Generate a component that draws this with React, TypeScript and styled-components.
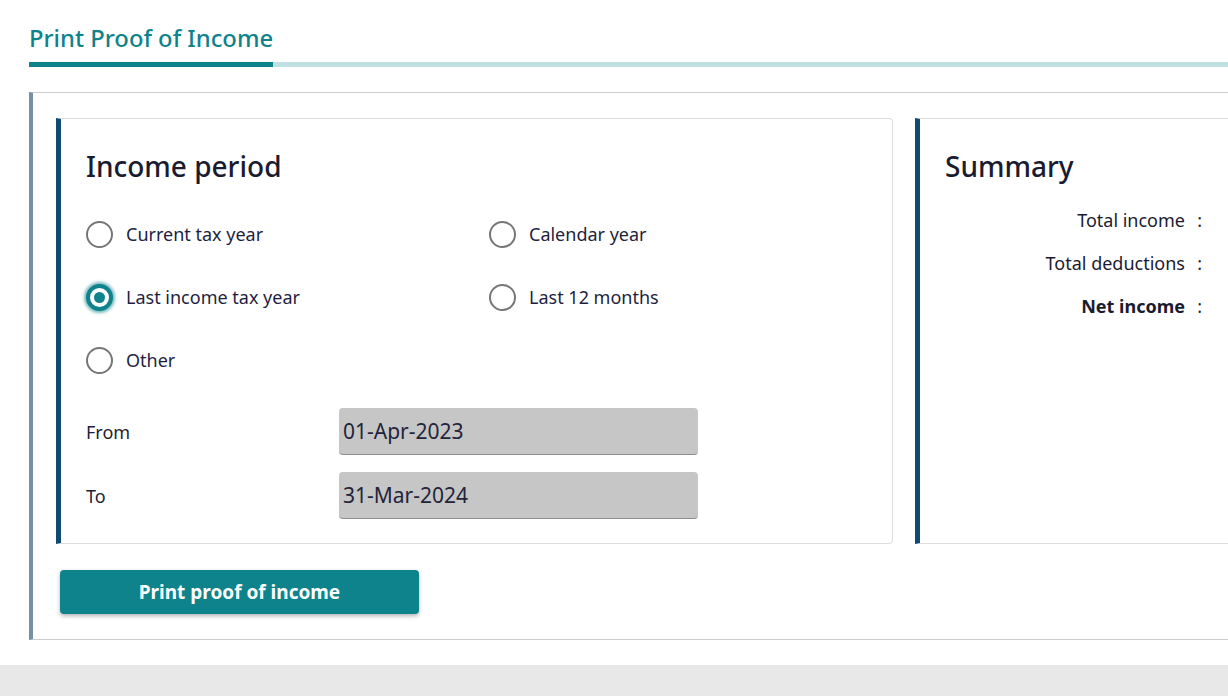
import React, { useState } from 'react'
import styled, { createGlobalStyle } from 'styled-components'

const GlobalStyle = createGlobalStyle`
  html, body {
    margin: 0;
    padding: 0;
    background: #e8e8e8;
    font-family: "Noto Sans", "Open Sans", sans-serif;
    color: #1e1f36;
  }
`

const Page = styled.div`
  background: #fff;
  padding: 0 0 25px 29px;
  overflow: hidden;
`

const TitleBar = styled.div`
  padding-top: 20px;
  display: flex;
  flex-direction: column;
`

const Title = styled.h1`
  margin: 0;
  font-size: 23.8px;
  font-weight: 500;
  line-height: 36px;
  color: #0e838c;
`

const Rule = styled.div`
  display: flex;
  height: 5px;
  margin-top: 6px;
  background: #bfe0e3;
`

const RuleActive = styled.div`
  width: 244px;
  background: #0e838c;
`

const Panel = styled.section`
  margin-top: 25px;
  border-top: 1px solid #cccccc;
  border-bottom: 1px solid #cccccc;
  border-left: 4px solid #7490a7;
  padding: 25px 0 25px 23px;
`

const CardRow = styled.div`
  display: flex;
  gap: 22px;
  width: 1200px;
`

const Card = styled.div<{ $width: number; $rounded?: boolean }>`
  flex: 0 0 ${p => p.$width}px;
  box-sizing: border-box;
  height: 426px;
  border: 1px solid #dddddd;
  border-left: 5px solid #0f4a70;
  border-radius: ${p => (p.$rounded ? '0 4px 4px 0' : '0')};
  padding: 27px 25px 0 25px;
`

const CardTitle = styled.h2`
  margin: 0 0 20px 0;
  font-size: 28px;
  font-weight: 500;
  line-height: 40px;
  color: #1b1b30;
`

const RadioGrid = styled.div`
  display: grid;
  grid-template-columns: 403px 1fr;
  row-gap: 36px;
  padding-top: 15px;
`

const RadioLabel = styled.label`
  display: flex;
  align-items: center;
  gap: 13px;
  font-size: 18px;
  line-height: 27px;
  cursor: pointer;
  color: #1e1f40;
`

const RadioCircle = styled.span<{ $checked: boolean }>`
  box-sizing: border-box;
  width: 27px;
  height: 27px;
  border-radius: 50%;
  flex: 0 0 27px;
  border: ${p => (p.$checked ? '4px solid #0e838c' : '2px solid #767676')};
  background: #fff;
  display: flex;
  align-items: center;
  justify-content: center;
  box-shadow: ${p => (p.$checked ? '0 0 3px 2px rgba(14,131,140,0.55)' : 'none')};
  &::after {
    content: '';
    display: ${p => (p.$checked ? 'block' : 'none')};
    width: 11px;
    height: 11px;
    border-radius: 50%;
    background: #0e838c;
  }
`

const DateRows = styled.div`
  display: flex;
  flex-direction: column;
  gap: 17px;
  margin-top: 34px;
`

const DateRow = styled.div`
  display: grid;
  grid-template-columns: 253px 359px;
  align-items: center;
`

const DateLabel = styled.span`
  font-size: 18px;
  color: #1e1f36;
`

const DateField = styled.div`
  height: 47px;
  box-sizing: border-box;
  background: #c6c6c6;
  border-radius: 4px;
  border-bottom: 1px solid #8d8d8d;
  padding: 0 4px;
  display: flex;
  align-items: center;
  font-size: 21px;
  color: #23243a;
`

const SummaryList = styled.div`
  display: grid;
  grid-template-columns: 240px 17px;
  row-gap: 14px;
  margin-top: 0;
`

const SummaryKey = styled.span<{ $bold?: boolean }>`
  text-align: right;
  font-size: 18px;
  line-height: 29px;
  font-weight: ${p => (p.$bold ? 700 : 400)};
  color: #1b1b30;
`

const Colon = styled.span`
  text-align: right;
  font-size: 18px;
  line-height: 29px;
`

const PrintButton = styled.button`
  margin-top: 26px;
  margin-left: 4px;
  width: 359px;
  height: 44px;
  border: none;
  border-radius: 4px;
  background: #0e838c;
  color: #fff;
  font-family: inherit;
  font-size: 19px;
  font-weight: 700;
  box-shadow: 0 2px 4px rgba(0, 0, 0, 0.3);
  cursor: pointer;
`

const options = [
  'Current tax year',
  'Calendar year',
  'Last income tax year',
  'Last 12 months',
  'Other',
]

export default function App() {
  const [period, setPeriod] = useState('Last income tax year')

  return (
    <>
      <GlobalStyle />
      <Page>
        <TitleBar>
          <Title>Print Proof of Income</Title>
          <Rule>
            <RuleActive />
          </Rule>
        </TitleBar>
        <Panel>
          <CardRow>
            <Card $width={837} $rounded>
              <CardTitle>Income period</CardTitle>
              <RadioGrid>
                {options.map(o => (
                  <RadioLabel key={o} onClick={() => setPeriod(o)}>
                    <RadioCircle $checked={period === o} />
                    {o}
                  </RadioLabel>
                ))}
              </RadioGrid>
              <DateRows>
                <DateRow>
                  <DateLabel>From</DateLabel>
                  <DateField>01-Apr-2023</DateField>
                </DateRow>
                <DateRow>
                  <DateLabel>To</DateLabel>
                  <DateField>31-Mar-2024</DateField>
                </DateRow>
              </DateRows>
            </Card>
            <Card $width={400}>
              <CardTitle>Summary</CardTitle>
              <SummaryList>
                <SummaryKey>Total income</SummaryKey>
                <Colon>:</Colon>
                <SummaryKey>Total deductions</SummaryKey>
                <Colon>:</Colon>
                <SummaryKey $bold>Net income</SummaryKey>
                <Colon>:</Colon>
              </SummaryList>
            </Card>
          </CardRow>
          <PrintButton>Print proof of income</PrintButton>
        </Panel>
      </Page>
    </>
  )
}
